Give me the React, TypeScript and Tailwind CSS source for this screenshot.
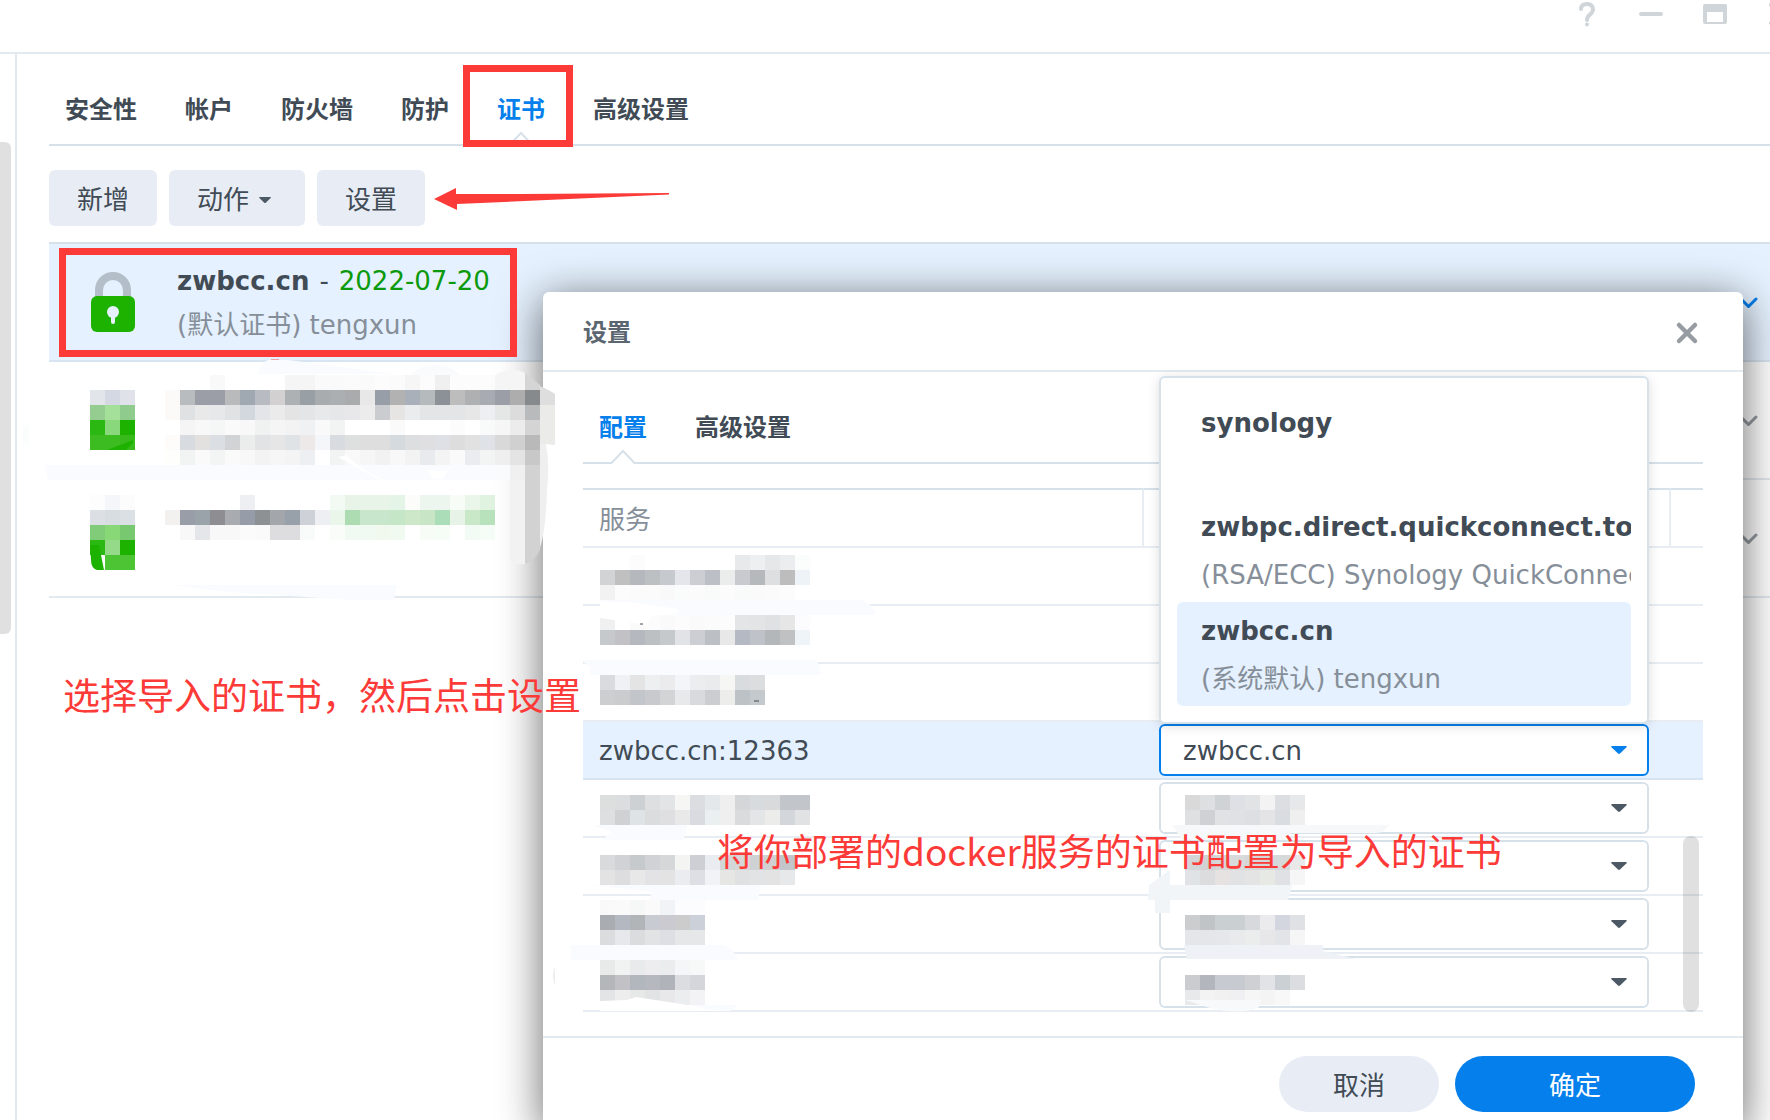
import { clsx } from 'clsx';

const mainTabs = ['安全性', '帐户', '防火墙', '防护', '证书', '高级设置'];
const dialogTabs = ['配置', '高级设置'];

type Cells = { top: number; rows: string[] };

const lockCells: Cells[] = [
  {
    top: 28,
    rows: ['e2e6ea d4d8e2 dfe2e8', '95cd90 a4e09a 8fcb8c', '2cb812 8ad87c 1eb200', '3cbc20 3cbc20 38ba1c'],
  },
  {
    top: 15,
    rows: ['fdfdfd f5f6f9 fcfcfc', 'dce0e5 d8dde2 dae0e4', '80cc78 88d878 78c870', '2cb812 94da88 1eb200', '- 4cc434 4cc434'],
  },
];

const nameCells: Cells[] = [
  {
    top: 13,
    rows: [
      '- - - f9f9f9 - - - - f5f5f5 f5f5f5 fafafa fafafa fbfbfb fafafa fcfcfc fbfbfb f6f6f6 fcfcfc f0f0f0 fcfcfc fcfcfc fcfcfc',
      'fcfaf8 b8bcbe 9b9ea6 9b9ea6 b8babc a0a9b2 b8bcc2 d2d0d0 adb1b3 98a0a6 a9acae abafb1 a9abad e8e8e8 979ea8 b3b2b2 a9b0b9 b5babd 8c9197 bdbdbd afb0b2 a9abb3',
      'fcfaf8 e0e1e3 e9e9e9 e7e8e9 e1e2e4 d2d8dd e4e5e8 ebebeb e4e4e4 e4e5e6 e8e9ea e6e7e9 e8e8ea ececec cbccd0 e6e5e4 ebecee e4e5e6 e4e5e6 e4e5e7 e7e7e7 eeeff2',
      '- f5f5f5 f8f8f8 f5f6f6 fafafa f8f8f8 f0f1f1 f5f5f5 f3f3f3 eff1f2 f9f9f9 f2f3f3 - - - fafafa - - - fcfcfc - f9fafa',
      'fefcfa d8dce0 e2e1e0 dbdfe3 d2d3d5 ebecec e1e3e5 e6e6e7 dfe3e5 ece9e8 f5f6f9 d8dce1 dedfdf dedede dedede d5dade dddee0 dfdfe1 dfe0e5 dddddd e1e1e1 dfe2e6',
      'fefefc f2f3f3 fafafa f3f5f4 fafafa f8f8f8 f3f3f3 f6f6f6 f4f4f4 eeeff2 - f2f3f3 f9f9f9 f6f6f6 f2f2f2 f8f8f8 f3f3f3 e9eaee f4f4f4 fafafa eaecf0 f3f4f4',
    ],
  },
  {
    top: 15,
    rows: [
      '- - - - - eeeff2 - - - - - f3f9f3 e8f4e8 e8f4e8 e8f4e8 e4f4e6 fcfdfa ecf6ee ecf6ee f8fcf6 eaf6ea e0f3e0',
      'f3f1f0 989da8 9ba3aa 8e8d91 a8abb0 969ca8 8e9194 a3a7ab 98a0a9 cfd1d9 eeeff3 eaf6ea addcb3 c8e6cb c8e6cb c6e6c8 cce8c8 c8e6c6 abddb8 e6f3e6 c8e8c8 b8e2bc',
      '- f8f8f8 e4e6ea f8f8f8 f8f8f8 fbfbfb fafafa dddddf dddddf f9fafa - fafcfa f0faf2 f0faf2 f1f9ee f1faf0 - f7fcf6 f6fcf6 - f3fcf4 f6fdf6',
    ],
  },
];

// Tail of the first hidden name, painted above the dialog's shadow
const tailCells: Cells = {
  top: 390,
  rows: ['9b9ea7 adadad 868a8c', 'e5e6e6 dcdcdc b9babb', 'f6f6f6 ececec d4d4d4', 'd9d9d9 d0d0d0 b9b9b9', 'efefef e4e4e4 c8c8c8', 'fafbfc f0f0f0 d2d2d2'],
};

type Service = { name?: string; cells?: Cells; value?: Cells };

const services: Service[] = [
  {
    cells: {
      top: 7,
      rows: [
        '- - fcfcfc - - - - - - e8e9ea eeeff0 e6e7e8 ecedef fbfdfc',
        'd2d3d5 c0c0c1 b5b9be bcc0c3 c6c9cd e5e6eb cdced3 bcc0c6 ebedec c8cad0 b5b9bc dedfe1 bdbdbd eef3f8',
        'f2f2f3 fcfcfc fbfbfb fbfbfb f9f9f9 fafcfb fbfbfb f9fafa fcfcfc f9fbfa fafafa fbfbfb fcfcfc',
      ],
    },
  },
  {
    cells: {
      top: 9,
      rows: [
        'f0f0f1 - fafafa fcfcfc fafafa fcfcfc fafafa fbfbfb fcfcfc e4e5e7 e3e4e6 dfe1e2 e6e6e7 fcfcff',
        'c6c9cc c2c2c6 b5b9bf bcc0c3 c6c9cc e2e3e6 cdced3 bcc0c4 e8e8e8 b4b9c4 bfc2c9 b3b7ba c0c1c3 eff4f8',
      ],
    },
  },
  {
    cells: {
      top: 11,
      rows: [
        'dadbdf f0f1f4 e5e4e4 eeeff1 ebebed f4f5f8 ecedef eaebed f6f6f4 d9dcdf dcdddf',
        'cdced0 cbccce c2c5ca c9cacd d3d4d6 e8e9eb d9dadd cccdd1 ededeb bdc2c7 c4c9cd',
      ],
    },
  },
  { name: 'zwbcc.cn:12363' },
  {
    cells: {
      top: 15,
      rows: [
        'dddfde dcdddf cdd1d4 dedfe1 e3e4e6 f6f6f4 dbdde1 e4e8ea efefef d5d6d8 d8dbde d9dadb c2c5c9 c2c5c9',
        'dedfe0 d0d1d3 dee3e6 dbdcde dfdfe1 e9e9e9 d9dbe0 eaeff0 efefef dadbdd e4e5e7 ececeb d3d7db e1e2e4',
      ],
    },
    value: {
      top: 15,
      rows: [
        'd9d9da dedfe1 d0d3d6 dee0e5 e2e3e5 f3f3f4 dddee2 e7e8ea',
        'dfe0e2 d0d1d4 e1e2e4 e0e1e4 dedfe3 e4e4e6 d9dce0 efefef',
      ],
    },
  },
  {
    cells: {
      top: 17,
      rows: [
        'd9dadc d1d2d5 c7cacd d1d2d5 d6d7d9 f4f4f2 cdcfd4 e9ecf0 d3d7d8 d6d6d7 cfd2d2 d1d1d1 c2c6ca',
        'e3e3e3 dddddf e7e8e7 e3e3e5 e3e3e4 ebecef dedfe4 f2f3f6 e6e6e5 e0e1e3 e2e3e5 e3e3e4 e7e8ea',
      ],
    },
    value: {
      top: 17,
      rows: [
        'd3d5d7 d2d2d4 d6d6d8 d9dbdb d7d7d9 d5d8d9 d6d9da e9e9e9',
        'e0e3e5 dcdcdf e5e2e1 e1e2e4 e4e4e4 e7e9e5 dfe1e4 f6f6f6',
      ],
    },
  },
  {
    cells: {
      top: 4,
      rows: [
        'f9f9f9 fafafa f6f8f7 fafafa f2f3f6 fcfcfe fcfcfe',
        'a9acb1 b3b8c1 b1b5b8 c9cbd2 cacad0 cccccc cbd0d9',
        'dbdcde e7e8eb dbdcde e2e3e5 dedfe4 e6e7e9 e6e7e9',
      ],
    },
    value: {
      top: 19,
      rows: [
        'cccdcf c0c4c7 cacfd1 cacfd1 d8d9dc ebebed d3d6de e0e1e4',
        'e5e6e9 e5e6e9 e6e7ea e9eaeb ebecec e7e7ea e3e4e8 f6f6f6',
      ],
    },
  },
  {
    cells: {
      top: 6,
      rows: [
        'e8e9e9 f1f3f2 e9eaec ededef ebecee f5f6f8 f7f9f9',
        'b3b7b9 c1c1c6 b1b7bc b5b8bf b0b4ba dcdde0 d5d6db',
        'e3e4e6 ededed e7e8e8 e2e3e5 e8e8ea ecedef f3f3f5',
      ],
    },
    value: {
      top: 21,
      rows: [
        'cbcccf b3b6bc c7cad0 c7cad0 cfd0d3 e2e3e6 cbd0d5 dcdde0',
        'e8e9eb f3f3f4 f1f1f1 f0f0f3 f6f6f6 f3f4f3 f8f8f8',
      ],
    },
  },
];

const options = [
  { name: 'synology', note: '' },
  { name: 'zwbpc.direct.quickconnect.to', note: '(RSA/ECC) Synology QuickConnect' },
  { name: 'zwbcc.cn', note: '(系统默认) tengxun', selected: true },
];

// Pixelated block for hidden values, 15px per cell
function Mosaic({ cells, height, className }: { cells: Cells; height: number; className?: string }) {
  const width = Math.max(...cells.rows.map((row) => row.split(' ').length)) * 15;
  return (
    <svg width={width} height={height} shapeRendering="crispEdges" aria-hidden="true" className={clsx('block shrink-0', className)}>
      {cells.rows.map((row, r) =>
        row.split(' ').map((color, c) =>
          color === '-' ? null : (
            <rect key={`${r}-${c}`} x={c * 15} y={cells.top + r * 15} width="15" height="15" fill={`#${color}`} />
          ),
        ),
      )}
    </svg>
  );
}

function Tabs({ items, active, label }: { items: string[]; active: string; label: string }) {
  return (
    <div role="tablist" aria-label={label} className="flex h-[92px] gap-12 border-b-2 border-[#d7e1ea] pl-4">
      {items.map((item) => (
        <button
          key={item}
          type="button"
          role="tab"
          aria-selected={item === active}
          className={clsx('relative pt-[22px] text-2xl font-bold', item === active ? 'text-[#057feb]' : 'text-[#414b55]')}
        >
          {item}
          {item === active && (
            <svg width="26" height="15" viewBox="0 0 26 15" className="absolute -bottom-0.5 left-1/2 -translate-x-1/2">
              <path d="M1 15V13L13 1L25 13V15Z" fill="#fff" />
              <path d="M0 14H1.5L13 2L24.500 14H26" fill="none" stroke="#d7e1ea" strokeWidth="2" />
            </svg>
          )}
        </button>
      ))}
    </div>
  );
}

function Lock() {
  return (
    <svg width="44" height="60" viewBox="0 0 44 60" aria-hidden="true" className="shrink-0">
      <path d="M8 28V18a14 14 0 0 1 28 0v10" fill="none" stroke="#b3bec8" strokeWidth="8" />
      <rect y="24" width="44" height="36" rx="6" fill="#1eb200" />
      <circle cx="22" cy="40" r="6" fill="#e5f1fe" />
      <path d="M22 42v8" stroke="#e5f1fe" strokeWidth="4" strokeLinecap="round" />
    </svg>
  );
}

function Chevron({ className }: { className?: string }) {
  return (
    <svg width="20" height="12" viewBox="0 0 20 12" aria-hidden="true" className={clsx('ml-auto shrink-0', className)}>
      <path d="M3 3L10.500 10.500L18 3" fill="none" stroke="currentColor" strokeWidth="3" strokeLinecap="round" />
    </svg>
  );
}

function Caret({ className }: { className?: string }) {
  return (
    <svg width="16" height="8" viewBox="0 0 16 8" aria-hidden="true" className={className}>
      <path d="M1 0h14q1.500 0 .5 1.200L9 7.500q-1 .8-2 0L.5 1.200Q-.5 0 1 0Z" fill="currentColor" />
    </svg>
  );
}

function CertSelect({ service, index }: { service: Service; index: number }) {
  const open = Boolean(service.name);
  return (
    <div className="relative">
      <select
        aria-label={service.name ?? `服务 ${index + 1}`}
        className={clsx(
          'block h-[52px] w-full appearance-none rounded-md border-2 bg-white pl-[22px] pt-0.5 text-[26px] text-[#414b55] outline-none',
          open ? 'border-[#057feb]' : 'border-[#d7e1ea]',
        )}
      >
        <option>{open ? 'zwbcc.cn' : ''}</option>
      </select>
      <Caret className={clsx('pointer-events-none absolute right-[22px] top-[22px]', open ? 'text-[#057feb]' : 'text-[#4c5965]')} />
      {service.value && (
        <Mosaic cells={service.value} height={56} className="pointer-events-none absolute -top-0.5 left-[26px]" />
      )}
      {open && (
        <ul
          role="listbox"
          aria-label="证书"
          className="absolute inset-x-0 bottom-full rounded-md border-2 border-[#d7e1ea] bg-white p-4 shadow-[0_2px_12px_rgba(0,0,0,0.14)]"
        >
          {options.map((option) => (
            <li
              key={option.name}
              role="option"
              aria-selected={Boolean(option.selected)}
              className={clsx('h-[104px] overflow-hidden whitespace-nowrap rounded-md pl-6 pt-[5px] leading-[48px]', option.selected && 'bg-[#e5f1fe]')}
            >
              <p className="font-bold">{option.name}</p>
              <p className="text-[#868f99]">{option.note}</p>
            </li>
          ))}
        </ul>
      )}
    </div>
  );
}

function SettingsDialog() {
  return (
    <section
      role="dialog"
      aria-labelledby="dialog-title"
      className="absolute left-[543px] right-[27px] top-[292px] rounded-md bg-white shadow-[0_8px_44px_rgba(0,0,0,0.6)]"
    >
      <header className="flex h-20 items-center justify-between border-b-2 border-[#e2e9ef] pl-10 pr-11 pt-[3px]">
        <h2 id="dialog-title" className="text-2xl font-bold text-[#5b6670]">设置</h2>
        <button type="button" aria-label="关闭">
          <svg width="24" height="24" viewBox="0 0 24 24">
            <path d="M4 4L20 20M20 4L4 20" stroke="#969ca2" strokeWidth="4.500" strokeLinecap="round" />
          </svg>
        </button>
      </header>
      <div className="mx-10">
        <Tabs items={dialogTabs} active="配置" label="设置" />
        <div className="relative mt-6">
          <table className="w-full table-fixed border-separate border-spacing-0 text-left">
            <thead>
              <tr className="text-[#868f99]">
                <th scope="col" className="h-[60px] w-[561px] border-y-2 border-r-2 border-b-[#e8edf3] border-r-[#e8edf3] border-t-[#d7e1ea] pb-0 pl-4 pt-[3px] font-normal">
                  服务
                </th>
                <td className="border-y-2 border-r-2 border-b-[#e8edf3] border-r-[#e8edf3] border-t-[#d7e1ea]" />
                <td className="w-8 border-y-2 border-b-[#e8edf3] border-t-[#d7e1ea]" />
              </tr>
            </thead>
            <tbody>
              {services.map((service, i) => (
                <tr key={i} className={clsx(service.name && 'bg-[#e5f1fe]')}>
                  <td className={clsx('h-[58px] border-b-2', service.name ? 'border-[#d7e4f1] pb-0 pl-4 pt-0.5' : 'border-[#e8edf3] p-0 pl-[17px]')}>
                    {service.name}
                    {service.cells && <Mosaic cells={service.cells} height={56} />}
                  </td>
                  <td className={clsx('border-b-2 py-0 pl-[15px] pr-[22px]', service.name ? 'border-[#d7e4f1]' : 'border-[#e8edf3]')}>
                    <CertSelect service={service} index={i} />
                  </td>
                  <td className={clsx('border-b-2', service.name ? 'border-[#d7e4f1]' : 'border-[#e8edf3]')} />
                </tr>
              ))}
            </tbody>
          </table>
          <div className="absolute bottom-0 right-1 h-44 w-4 rounded-full bg-black/12" />
        </div>
      </div>
      <footer className="mt-6 flex justify-end gap-4 border-t-2 border-[#e2e9ef] px-12 pb-4 pt-[18px]">
        <button type="button" className="h-14 w-40 rounded-full bg-[#e8edf5] pt-[3px]">取消</button>
        <button type="button" className="h-14 w-60 rounded-full bg-[#057feb] pt-[3px] text-white">确定</button>
      </footer>
    </section>
  );
}

// Red marks and brush strokes drawn on top of the window
function Annotations() {
  return (
    <div className="pointer-events-none absolute inset-0">
      <Mosaic cells={tailCells} height={480} className="absolute left-[495px] top-0" />
      <svg width="1770" height="1120" viewBox="0 0 1770 1120" className="absolute left-0 top-0" aria-hidden="true">
        <path d="M268 360H288L395 374H258Q262 362 268 360Z" fill="#fafbfe" />
        <path d="M271 359.500H279" stroke="#f3a0a4" strokeWidth="1" />
        <path d="M411 375Q418 365 435 365Q452 365 460 375Z" fill="#fafbfd" />
        <path d="M45 465H495V480H48Z" fill="#fafbfe" />
        <path d="M495 375Q512 366 525 373V390H495Z" fill="#f5f5f5" />
        <path d="M510 480H525V564Q514 565 510 560Z" fill="#f2f2f2" />
        <path d="M525 373L540 385V390H525Z" fill="#d5d5d5" />
        <path d="M525 480H540V550Q535 561 525 564Z" fill="#d2d2d2" />
        <path d="M540 386Q551 391 555 394V405H540Z" fill="#dedede" />
        <path d="M540 405H555V445L546 444L540 450Z" fill="#ebebea" />
        <path d="M540 444H546Q550 465 547 490Q546 530 540 548Z" fill="#efefef" />
        <path d="M29 422Q22 428 22 436Q22 443 29 448Z" fill="#fbfcfc" />
        <path d="M338 457L347 455Q354 465 384 480L378 479Q350 464 338 457Z" fill="#fff" />
        <path d="M426 470L447 471L443 479H434Z" fill="#fff" />
        <path d="M107 450L133 440V443L126 450Z" fill="#1eb200" />
        <path d="M90 545H99L104 570H97Q91 568 91 560Z" fill="#1eb200" />
        <path d="M171 585H397L394 600H350L230 592Z" fill="#fafbfe" />
        <path d="M597 600H860Q872 602 876 615H680Z" fill="#fafbfe" />
        <path d="M600 602H630L678 609V613H655L647 624H640L600 618Z" fill="#fff" />
        <path d="M581 660H816Q820 665 820 675H589L591 668Z" fill="#fafbfe" />
        <path d="M592 825H687Q687 832 683 840H602L612 832Z" fill="#fafbfe" />
        <path d="M590 885H761L758 900H650L652 892Z" fill="#fafbfe" />
        <path d="M571 945H723Q735 950 738 960H571Z" fill="#fafbfe" />
        <path d="M600 1001L627 1000L636 997L662 1001L687 1005H738L728 1011H600Z" fill="#fff" />
        <path d="M690 1005H738L730 1011Q710 1011 690 1005Z" fill="#fafbfe" />
        <path d="M555 966Q551 975 555 986Z" fill="#eee" />
        <path d="M1172 825H1389Q1386 832 1376 833H1290V840H1182Z" fill="#f6f8fa" />
        <path d="M1149 885L1170 870V885H1292L1288 900H1170V913H1155V900H1148Z" fill="#f1f5f8" />
        <path d="M1184 945H1323V951L1356 959H1187Z" fill="#eef2f6" />
        <path d="M1185 1000H1262L1258 1008Q1240 1015 1210 1008Z" fill="#f7f9fb" />
        <path d="M640 624h3M754 701h5" stroke="#414b55" strokeWidth="1" />
        <path d="M434 199L456 188V194H520L669 193V194.500L457 204V210Z" fill="#fc3a38" />
      </svg>
      <div className="absolute left-[463px] top-[65px] h-[82px] w-[110px] border-[7px] border-[#fc3a38]" />
      <div className="absolute left-[59px] top-[248px] h-[109px] w-[458px] border-[7px] border-[#fc3a38]" />
      <p className="absolute left-[63px] top-[667px] whitespace-nowrap font-['Noto_Sans_CJK_SC',sans-serif] text-[37px] leading-[54px] text-[#fc3a38]">
        选择导入的证书，然后点击设置
      </p>
      <p className="absolute left-[717px] top-[823px] whitespace-nowrap font-['Noto_Sans_CJK_SC',sans-serif] text-[37px] leading-[54px] text-[#fc3a38]">
        将你部署的docker服务的证书配置为导入的证书
      </p>
    </div>
  );
}

export default function App() {
  return (
    <div
      lang="zh-CN"
      className="relative flex h-screen flex-col overflow-hidden bg-white font-['DejaVu_Sans','Noto_Sans_CJK_SC',sans-serif] text-[26px] leading-9 text-[#414b55]"
    >
      <header className="flex h-[54px] shrink-0 justify-end border-b-2 border-[#e2e9ef] text-[#d0d5d9]">
        <div className="-mr-6 flex h-7 items-center gap-10">
          <button type="button" aria-label="帮助">
            <svg width="24" height="28" viewBox="0 0 24 28">
              <path d="M6 9Q6 4 12 4Q18 4 18 9.500Q18 12 15 14.500Q12 17 12 20" fill="none" stroke="currentColor" strokeWidth="4" strokeLinecap="round" />
              <circle cx="12" cy="24.500" r="2" fill="currentColor" />
            </svg>
          </button>
          <button type="button" aria-label="最小化">
            <svg width="24" height="28" viewBox="0 0 24 28">
              <rect y="12" width="24" height="4" rx="2" fill="currentColor" />
            </svg>
          </button>
          <button type="button" aria-label="最大化">
            <svg width="24" height="28" viewBox="0 0 24 28">
              <path fillRule="evenodd" d="M2 4H22Q24 4 24 6V22Q24 24 22 24H2Q0 24 0 22V6Q0 4 2 4ZM4 12V22H20V12Z" fill="currentColor" />
            </svg>
          </button>
          <button type="button" aria-label="关闭窗口">
            <svg width="27" height="28" viewBox="0 0 27 28">
              <path d="M4 5L22 23M22 5L4 23" stroke="currentColor" strokeWidth="4" strokeLinecap="round" />
            </svg>
          </button>
        </div>
      </header>

      <div className="flex grow">
        <aside className="w-[17px] shrink-0 border-r-2 border-[#e2e9ef] pt-[88px]">
          <div className="h-[492px] w-[11px] rounded-r-md bg-[#e0e0e0]" />
        </aside>
        <main className="min-w-0 grow pl-8">
          <Tabs items={mainTabs} active="证书" label="安全性" />
          <div className="mb-4 mt-6 flex gap-3">
            <button type="button" className="h-14 w-[108px] rounded-md bg-[#e8edf5] pt-[3px]">新增</button>
            <button type="button" className="flex h-14 w-[136px] items-center justify-center gap-2.5 rounded-md bg-[#e8edf5] pr-1.5 pt-[3px]">
              动作
              <Caret className="w-3 text-[#4c5965]" />
            </button>
            <button type="button" className="h-14 w-[108px] rounded-md bg-[#e8edf5] pt-[3px]">设置</button>
          </div>
          <ul className="border-t-2 border-[#d7e1ea]">
            <li className="flex h-[118px] items-center border-b-2 border-[#d7e4f1] bg-[#e5f1fe] pl-[42px] pr-3">
              <Lock />
              <div className="pl-[42px] pt-0.5 leading-[44px]">
                <p className="flex gap-2.5">
                  <b>zwbcc.cn</b>
                  <span>-</span>
                  <span className="text-[#0c9a0c]">2022-07-20</span>
                </p>
                <p className="text-[#868f99]">(默认证书) tengxun</p>
              </div>
              <Chevron className="text-[#057feb]" />
            </li>
            {nameCells.map((cells, i) => (
              <li key={i} className="flex h-[118px] items-center border-b-2 border-[#e2e9ef] pl-[41px] pr-3">
                <Mosaic cells={lockCells[i]} height={116} />
                <Mosaic cells={cells} height={116} className="ml-[30px]" />
                <Chevron className="text-[#969ca2]" />
              </li>
            ))}
          </ul>
        </main>
      </div>

      <SettingsDialog />
      <Annotations />
    </div>
  );
}
